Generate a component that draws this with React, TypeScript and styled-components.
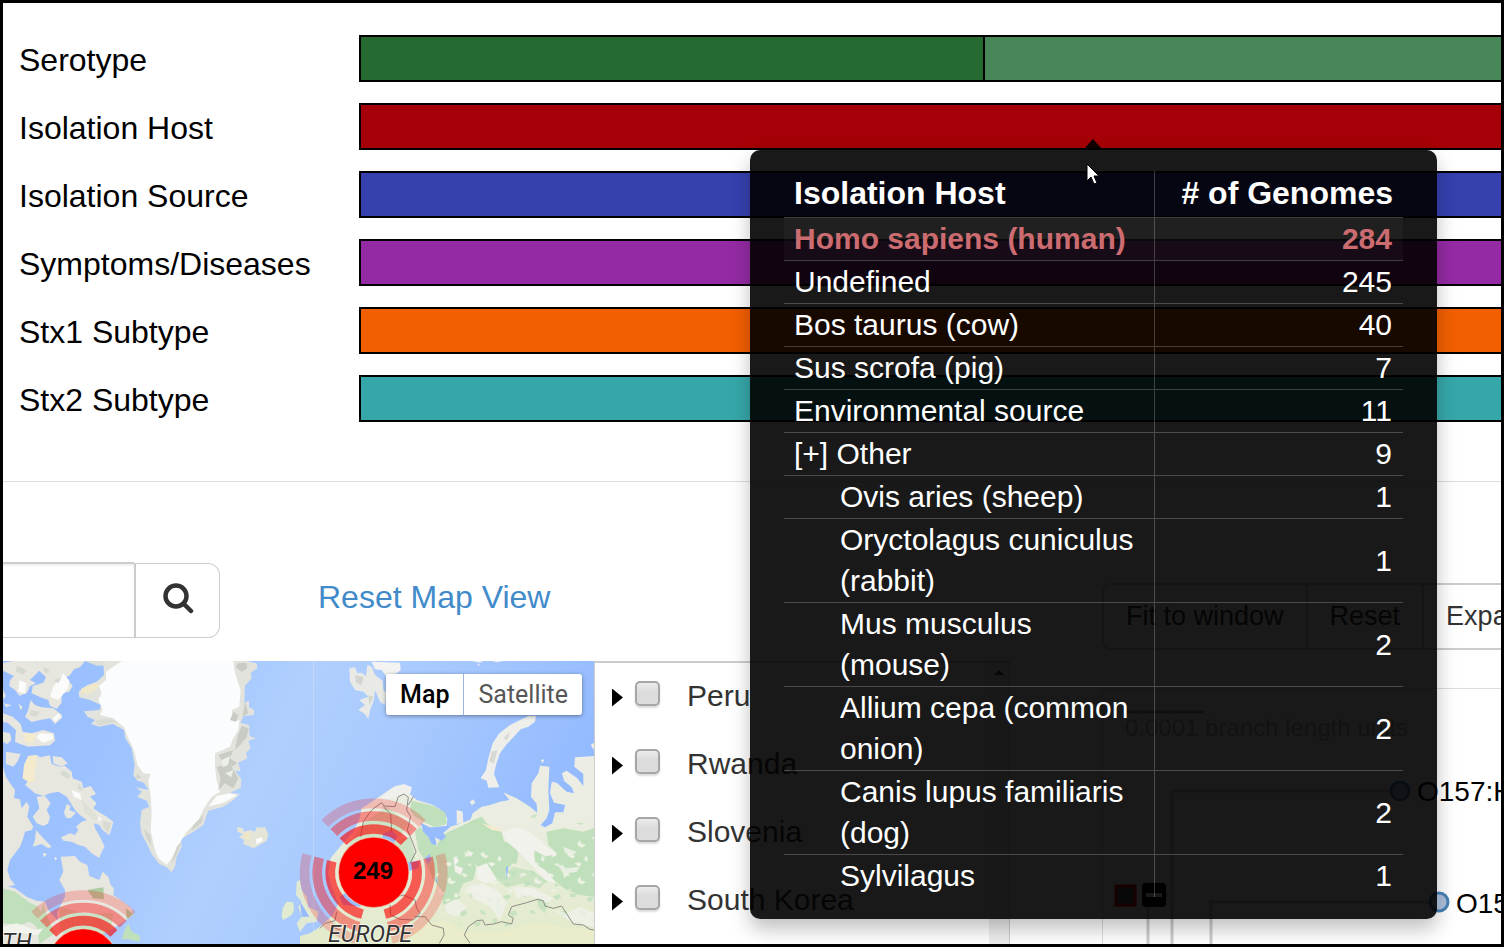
import React from "react";
import styled, { createGlobalStyle, css } from "styled-components";

const Global = createGlobalStyle`
  *, *::before, *::after { box-sizing: border-box; }
  body { margin: 0; background: #fff; }
  button, input, table { font: inherit; }
`;

const Frame = styled.div`
  display: flex;
  flex-direction: column;
  height: 100vh;
  overflow: hidden;
  border: 3px solid #000;
  background: #fff;
  color: #000;
  font-family: "Liberation Sans", Arial, sans-serif;
  font-size: 32px;
`;

const Chart = styled.section`
  display: flex;
  flex-direction: column;
  gap: 21px;
  padding: 32px 0 59px 16px;
  border-bottom: 1px solid #ddd;
`;

const ChartRow = styled.div`
  display: grid;
  grid-template-columns: 340px 1fr;
  height: 47px;
  line-height: 50px;
`;

const Track = styled.div`
  position: relative;
  display: flex;
  height: 47px;
`;

const Segment = styled.div<{ $color: string; $share: number }>`
  flex: ${(p) => p.$share};
  background: ${(p) => p.$color};
  border: 2px solid #000;
  border-right: 0;
`;

const Tooltip = styled.div`
  position: absolute;
  z-index: 5;
  top: 47px;
  left: 391px;
  width: 687px;
  padding: 21px 34px 22px;
  border-radius: 10px;
  background: rgba(0, 0, 0, 0.9);
  box-shadow: 0 10px 20px rgba(0, 0, 0, 0.25);
  color: #fff;

  &::before {
    content: "";
    position: absolute;
    left: 333px;
    bottom: 100%;
    border: 10px solid transparent;
    border-top: 0;
    border-bottom: 11px solid rgba(0, 0, 0, 0.9);
  }
`;

const Pointer = styled.svg`
  position: absolute;
  top: 13px;
  left: 335px;
`;

const HostTable = styled.table`
  width: 100%;
  border-collapse: separate;
  border-spacing: 0;
  table-layout: fixed;
  font-size: 30px;
  line-height: 41px;
  text-align: left;
`;

const cell = css`
  border-top: 1px solid rgba(255, 255, 255, 0.22);
  font-weight: inherit;
`;

const HeadCell = styled.th<{ $number?: boolean }>`
  width: ${(p) => (p.$number ? "248px" : "371px")};
  height: 46px;
  padding: 0 10px 2px;
  font-size: 32px;
  font-weight: bold;
  text-align: ${(p) => (p.$number ? "right" : "left")};
  border-right: ${(p) => (p.$number ? "0" : "1px solid rgba(255, 255, 255, 0.22)")};
`;

const HostRow = styled.tr<{ $active?: boolean }>`
  ${(p) =>
    p.$active &&
    css`
      color: #cc6c70;
      font-weight: bold;
      background: rgba(255, 255, 255, 0.03);
    `}
`;

const NameCell = styled.th<{ $nested?: boolean }>`
  ${cell}
  padding: 0 14px 1px ${(p) => (p.$nested ? "56px" : "10px")};
  border-right: 1px solid rgba(255, 255, 255, 0.22);
`;

const CountCell = styled.td`
  ${cell}
  padding: 0 11px 1px;
  text-align: right;
`;

const Workspace = styled.div`
  display: grid;
  grid-template-columns: 1007fr 491fr;
  flex: 1;
  min-height: 0;
`;

const MapColumn = styled.section`
  display: flex;
  flex-direction: column;
  min-width: 0;
  padding-top: 80px;
`;

const MapTools = styled.div`
  display: flex;
  height: 76px;
  margin-bottom: 23px;
`;

const SearchBox = styled.form`
  display: flex;
  width: 217px;
`;

const SearchInput = styled.input`
  flex: 1;
  min-width: 0;
  padding: 0 16px;
  border: 0 solid #ccc;
  border-width: 2px 0 1px;
  box-shadow: inset 0 2px 2px rgba(0, 0, 0, 0.06);
  background: #fff;
`;

const SearchButton = styled.button`
  display: flex;
  align-items: center;
  justify-content: center;
  width: 86px;
  margin-top: 1px;
  padding: 0 0 4px;
  border: 1px solid #ccc;
  border-left: 2px solid #ccc;
  border-radius: 0 12px 12px 0;
  background: #fff;
`;

const ResetLink = styled.a`
  margin-left: 98px;
  line-height: 71px;
  color: #428bca;
  text-decoration: none;
`;

const MapBody = styled.div`
  display: grid;
  grid-template-columns: 591fr 416fr;
  flex: 1;
  min-height: 0;
`;

const MapView = styled.div`
  position: relative;
  overflow: hidden;
  background: #a3c6ff;
`;

const MapArt = styled.svg`
  display: block;
  width: 100%;
  height: 100%;
`;

const MapTypes = styled.div`
  position: absolute;
  top: 13px;
  right: 12px;
  display: flex;
  border-radius: 3px;
  box-shadow: 0 1px 4px rgba(0, 0, 0, 0.4);
  font-family: Roboto, sans-serif;
  font-size: 25px;
`;

const MapType = styled.button<{ $on?: boolean }>`
  height: 41px;
  padding: 0 14px;
  border: 0;
  border-left: ${(p) => (p.$on ? "0" : "1px solid #9db2d8")};
  border-radius: ${(p) => (p.$on ? "3px 0 0 3px" : "0 3px 3px 0")};
  background: #fff;
  color: ${(p) => (p.$on ? "#000" : "#565656")};
  font-weight: ${(p) => (p.$on ? 500 : 400)};
`;

const PlacePanel = styled.div`
  display: flex;
  border: 0 solid #ccc;
  border-width: 2px 1px 0;
  overflow: hidden;
`;

const PlaceList = styled.ul`
  flex: 1;
  margin: 0;
  padding: 0 0 0 17px;
  list-style: none;
  color: #333;
  font-size: 30px;
`;

const PlaceItem = styled.li`
  display: flex;
  align-items: center;
  height: 68px;
  padding-bottom: 2px;
`;

const Disclosure = styled.button`
  width: 11px;
  height: 18px;
  margin: 3px 12px 0 0;
  padding: 0;
  border: 0;
  background: #000;
  clip-path: polygon(0 0, 100% 50%, 0 100%);
`;

const PlaceLabel = styled.label`
  display: flex;
  align-items: center;
  gap: 27px;
`;

const Tick = styled.input`
  appearance: none;
  width: 25px;
  height: 25px;
  margin: 0 0 6px;
  border: 2px solid #a6a6a6;
  border-radius: 5px;
  background: linear-gradient(#ececec, #dcdcdc 40%);
  box-shadow: 0 2px 2px rgba(0, 0, 0, 0.14);
`;

const Scrollbar = styled.div`
  display: flex;
  justify-content: center;
  width: 20px;
  padding-top: 7px;
  background: #eee;

  &::before {
    content: "";
    width: 10px;
    height: 5px;
    background: #444;
    clip-path: polygon(50% 0, 100% 100%, 0 100%);
  }
`;

const TreeColumn = styled.section`
  display: flex;
  flex-direction: column;
  min-width: 0;
  overflow: hidden;
  padding: 101px 0 0 92px;
`;

const ButtonGroup = styled.div`
  display: flex;
  width: max-content;
  margin-bottom: 38px;
  font-size: 27px;
`;

const GroupButton = styled.button`
  height: 67px;
  padding: 0 22px;
  border: 2px solid #ccc;
  border-right-width: 0;
  background: #fff;
  color: #333;

  &:first-child {
    border-radius: 8px 0 0 8px;
  }
`;

const TreePanel = styled.div`
  flex: 1;
  min-height: 0;
  border: 0 solid #ddd;
  border-width: 1px 0 0 1px;
`;

const TreeArt = styled.svg`
  display: block;
  width: 100%;
  height: 100%;
`;

const tracks = [
  { label: "Serotype", segments: [{ color: "#256b31", share: 624 }, { color: "#488858", share: 518 }] },
  { label: "Isolation Host", segments: [{ color: "#a50007", share: 1 }] },
  { label: "Isolation Source", segments: [{ color: "#3640ae", share: 1 }] },
  { label: "Symptoms/Diseases", segments: [{ color: "#942ba4", share: 1 }] },
  { label: "Stx1 Subtype", segments: [{ color: "#f25f00", share: 1 }] },
  { label: "Stx2 Subtype", segments: [{ color: "#36a7a9", share: 1 }] },
];

const hosts = [
  { name: "Homo sapiens (human)", count: 284, active: true },
  { name: "Undefined", count: 245 },
  { name: "Bos taurus (cow)", count: 40 },
  { name: "Sus scrofa (pig)", count: 7 },
  { name: "Environmental source", count: 11 },
  { name: "[+] Other", count: 9 },
  { name: "Ovis aries (sheep)", count: 1, nested: true },
  { name: "Oryctolagus cuniculus (rabbit)", count: 1, nested: true },
  { name: "Mus musculus (mouse)", count: 2, nested: true },
  { name: "Allium cepa (common onion)", count: 2, nested: true },
  { name: "Canis lupus familiaris (dog)", count: 2, nested: true },
  { name: "Sylvilagus", count: 1, nested: true },
];

const places = ["Peru", "Rwanda", "Slovenia", "South Korea"];

function HostTooltip() {
  return (
    <Tooltip role="tooltip">
      <HostTable>
        <thead>
          <tr>
            <HeadCell scope="col">Isolation Host</HeadCell>
            <HeadCell scope="col" $number># of Genomes</HeadCell>
          </tr>
        </thead>
        <tbody>
          {hosts.map((h) => (
            <HostRow key={h.name} $active={h.active}>
              <NameCell scope="row" $nested={h.nested}>{h.name}</NameCell>
              <CountCell>{h.count}</CountCell>
            </HostRow>
          ))}
        </tbody>
      </HostTable>
      <Pointer width="16" height="24" viewBox="0 0 16 24" aria-hidden="true">
        <path d="M2 1v17l4-4 3 7 3-1-3-7h5z" fill="#fff" stroke="#000" strokeWidth="1" />
      </Pointer>
    </Tooltip>
  );
}

function arc(cx: number, cy: number, r: number, from: number) {
  const at = (deg: number) => {
    const a = (deg * Math.PI) / 180;
    return `${(cx + r * Math.cos(a)).toFixed(1)} ${(cy + r * Math.sin(a)).toFixed(1)}`;
  };
  return `M${at(from)}A${r} ${r} 0 0 1 ${at(from + 90)}`;
}

function Cluster({ cx, cy, count }: { cx: number; cy: number; count?: number }) {
  const rings = [
    { r: 130, o: 0.62 },
    { r: 169, o: 0.4 },
    { r: 207, o: 0.2 },
  ];
  return (
    <g>
      {rings.map(({ r, o }) => (
        <path
          key={r}
          d={[-135, -15, 105].map((a) => arc(cx, cy, r, a)).join("")}
          fill="none"
          stroke="#f00"
          strokeOpacity={o}
          strokeWidth="29"
        />
      ))}
      <circle cx={cx} cy={cy} r="106" fill="#f00" stroke="#e0e8c8" strokeOpacity=".6" strokeWidth="4" />
      {count && (
        <text x={cx - 2} y={cy + 19} textAnchor="middle" fontFamily="Liberation Sans, Arial, sans-serif" fontWeight="bold" fontSize="72">
          {count}
        </text>
      )}
    </g>
  );
}

function WorldMap() {
  return (
    <MapArt viewBox="9 33 1773 849" preserveAspectRatio="xMidYMin slice" role="img" aria-label="Map of genome locations">
      <defs>
        <linearGradient id="sea" x1="0" x2="1" y1="0" y2=".25">
          <stop offset="0" stopColor="#97bdff" />
          <stop offset=".25" stopColor="#9dc2ff" />
          <stop offset=".5" stopColor="#b0cffe" />
          <stop offset=".68" stopColor="#a9cafe" />
          <stop offset="1" stopColor="#94bbff" />
        </linearGradient>
        <linearGradient id="steppe" x1="0" x2="0" y1="0" y2="1">
          <stop offset="0" stopColor="#edede6" />
          <stop offset=".35" stopColor="#eaede0" />
          <stop offset="1" stopColor="#e2ebcb" />
        </linearGradient>
        <pattern id="clearings" width="130" height="110" patternUnits="userSpaceOnUse">
          <g fill="#eef2e4">
            <path d="M10 12l14-4 6 8-12 2-4 8zM52 30l8-10 4 12 14 2-10 8-12-2zM96 8l16 6-4 8-10-4zM20 62l12-6 2 8 12 4-8 8-10-6zM78 66l6 10-4 10-8-8zM104 56l16 4-2 10-8-2-4 8zM44 90l14-4 8 6-10 8zM4 94l8 4-2 8zM112 92l10-2 2 10z" />
          </g>
        </pattern>
        <pattern id="groves" width="150" height="120" patternUnits="userSpaceOnUse">
          <g fill="#bfe0bb">
            <path d="M8 20l18-8 8 10-14 8zM60 8l10 4 12-2-6 12-16-2zM110 24l20-4-4 14-12 2zM30 66l16-6 6 12-14 8-6-6zM88 60l14 2 8 14-16-4zM14 100l14-2 4 8-16 4zM70 98l20-4 2 10-14 6zM130 86l12 2-4 12-10-4z" />
          </g>
        </pattern>
      </defs>
      <rect x="0" y="0" width="1800" height="900" fill="url(#sea)" />

      {/* Arctic Canada */}
      <g fill="#e7e6df">
        <path d="M9 38L40 33H105L118 62L90 90L108 100L90 108L80 130L58 137L45 120L28 108L30 90L42 78L25 70L9 62Z" />
        <path d="M105 33H255L240 52L222 58L210 75L195 85L212 100L218 108L208 125L186 130L184 160L170 176L150 168L145 150L118 140L95 130L98 108L130 98L138 82L115 60Z" />
        <path d="M92 150L105 165L125 172L160 175L186 195L185 205L165 222L150 205L120 210L95 216L75 200L85 180Z" />
        <path d="M9 190L38 200L62 222L68 245L95 250L130 240L162 250L165 272L150 286L85 290L60 282L45 275L48 240L25 220L9 215Z" />
        <path d="M9 245L30 250L34 270L22 283L9 275Z" />
        <path d="M18 305L62 312L52 335L40 350L18 342Z" />
        <path d="M9 120L18 138L9 148ZM55 160L68 172L62 180ZM12 160L35 166L18 172Z" />
        <path d="M85 318L110 315L120 322L150 316L155 342L180 350L195 348L215 365L218 385L245 395L250 415L272 408L288 432L270 440L290 460L280 475L300 488L320 500L340 515L335 535L328 556L308 540L298 525L282 520L285 535L300 560L314 590L305 605L298 624L275 610L255 590L235 585L215 575L190 572L183 562L210 550L225 555L235 540L228 530L245 515L260 510L240 495L225 480L200 440L175 425L150 430L130 438L105 430L75 405L85 392L68 385L72 345Z" />
        <path d="M158 318L185 322L203 340L185 350L160 340Z" />
        <path d="M9 350L18 380L30 400L45 420L42 445L60 448L65 475L80 455L88 470L82 500L100 530L95 540L75 545L68 570L60 590L30 630L22 660L30 685L45 705L9 712Z" />
        <path d="M110 440L135 438L152 460L140 480L150 500L145 520L130 528L110 520L98 500L118 475Z" />
        <path d="M108 540L130 565L155 590L145 595L125 582L98 590L105 570Z" />
        <path d="M200 462L212 468L208 480L228 488L212 505L198 503L192 488ZM128 608L142 612L132 622ZM162 620L172 625L166 632Z" />
        <path d="M9 705L45 715L80 740L110 752L135 755L145 780L175 812L170 790L195 740L195 720L178 690L190 665L182 620L225 618L240 635L262 645L268 678L298 690L308 665L325 680L332 705L342 715L340 735L365 752L395 775L400 795L370 815L340 835L310 850L300 882H9Z" />
      </g>
      <g fill="#fbfbfb">
        <path d="M190 70L208 92L205 115L175 150L150 140L160 110Z" />
        <path d="M120 250L158 252L160 268L130 278L108 262ZM175 190L184 200L165 216L158 205Z" />
        <path d="M58 90L80 100L75 130L55 125ZM215 420L240 430L245 450L222 440ZM288 495L305 505L298 515Z" />
      </g>
      <g fill="#d7dad1">
        <path d="M50 48L80 60L70 74L48 66ZM128 50L150 60L138 72ZM160 90L185 82L175 100ZM92 180L120 185L108 200L88 196ZM190 360L212 375L205 388L180 372ZM238 400L250 425L232 415ZM310 512L334 520L325 548L308 530Z" />
        <path d="M245 450L270 475L300 505L285 512L255 488Z" opacity=".5" />
      </g>
      <path d="M85 318L110 316L108 345L102 375L106 392L88 398L68 385L74 342Z" fill="#f3ebcb" />
      <path d="M72 250L108 252L100 278L75 276Z" fill="#f3ebcb" />
      <g fill="#bfe0bb">
        <path d="M9 715L45 725L85 755L115 770L130 800L110 830L90 815L60 825L9 820Z" />
        <path d="M130 760L142 800L165 850L118 882L110 830Z" />
        <path d="M180 770L250 790L340 790L330 850L180 850Z" opacity=".7" />
        <path d="M262 720L310 712L312 748L280 745ZM378 775L400 792L380 808Z" fill="#accb9f" />
      </g>
      <path d="M9 830L50 820L105 840L130 835L115 855L60 850L9 845Z" fill="#f2f3ed" />
      <path d="M385 820L395 845L420 858L418 875L385 868L365 868L372 845Z" fill="#bfe0bb" />

      {/* Greenland */}
      <path d="M255 33H365L345 45L290 47Z" fill="#dcdfd5" />
      <path d="M310 33L312 75L290 95L262 105L236 125L238 142L270 150L303 165L298 180L252 184L262 200L285 210L273 222L298 230L338 222L372 240L376 265L395 295L404 345L400 375L412 392L432 398L445 420L408 412L425 425L412 440L440 452L448 470L425 480L420 520L424 550L440 580L455 612L478 642L500 652L515 667L525 650L530 620L545 590L543 568L580 545L610 525L625 482L670 470L700 450L720 432L690 428L722 414L724 388L705 362L722 364L715 338L742 325L738 308L752 295L745 272L768 265L748 258L748 225L722 218L730 198L762 195L762 180L747 172L747 152L733 158L735 107L755 85L752 68L772 55L770 40L740 33Z" fill="#e2e3dc" />
      <path d="M365 33L318 65L318 90L296 108L305 130L295 150L308 178L300 195L340 205L372 232L385 265L402 300L412 345L430 370L452 372L445 392L452 440L455 490L452 540L462 590L475 625L500 645L515 625L535 585L560 545L595 510L612 475L635 440L660 425L650 390L645 350L645 310L690 290L700 265L715 240L718 210L700 215L695 180L718 170L722 120L705 70L700 33Z" fill="#fafcfd" />
      <path d="M625 470L650 438L690 430L712 436L670 458Z" fill="#fbfcfc" />
      <g fill="#c9ccc4">
        <path d="M712 40L740 38L742 55L725 66L708 52ZM735 155L745 190L728 200ZM725 228L746 235L740 262L720 285L705 300L712 262ZM700 185L715 195L708 215L690 210Z" />
        <path d="M655 315L700 300L690 325L712 340L695 350L715 385L700 415L675 400L655 420L662 385L650 350L675 345Z" />
        <path d="M580 525L610 495L605 520L575 542ZM530 590L545 575L525 625L515 640ZM412 370L425 385L408 385ZM430 535L450 555L455 590L440 565Z" opacity=".7" />
      </g>
      <path d="M665 330L690 318L684 345L668 352ZM676 370L700 360L694 382Z" fill="#eceeea" />
      <path d="M245 115L290 98L298 112L265 132L240 130Z" fill="#efe8cb" />
      <path d="M285 212L330 205L350 215L298 226Z" fill="#d8dbd4" />

      {/* Iceland */}
      <path d="M712 530L728 535L732 545L750 540L765 545L770 532L795 532L805 552L800 572L760 595L745 588L730 582L732 570L718 562L728 552L712 545Z" fill="#e4e5d6" />
      <path d="M735 550L750 548L748 565L735 568Z" fill="#f0e8c4" />
      <path d="M768 568L785 562L788 572L770 582Z" fill="#fff" />

      <g transform="translate(900 0)">
        <rect x="39" y="33" width="2" height="849" fill="#d5e4fb" opacity=".7" />
        {/* Svalbard and Novaya Zemlya */}
        <path d="M148 55L165 52L172 70L185 68L198 78L202 45L215 50L225 75L248 92L250 120L260 130L255 165L240 155L225 120L222 150L210 180L205 207L192 190L175 180L195 165L178 150L205 140L190 125L165 120L150 95Z" fill="#e9eae6" />
        <path d="M165 75L190 82L185 105L168 98ZM205 135L220 140L208 165Z" fill="#d3d6d0" />
        <path d="M215 35L300 38L302 60L290 70L258 78L245 60L225 58Z" fill="#f3f4f2" />
        <path d="M515 33H550L540 38ZM575 33H610L590 37ZM532 40L540 44L535 48Z" fill="#eee" />
        <path d="M685 198L708 198L705 215L685 230L662 238L640 262L618 285L600 310L588 345L582 372L598 412L565 413L560 392L542 385L558 360L565 325L578 280L598 250L630 225Z" fill="#eeeeea" />
        <path d="M575 305L592 300L582 340L568 335ZM610 265L630 245L622 270Z" fill="#d7d9d5" />

        {/* British Isles */}
        <path d="M-40 755L-20 757L-18 780L-25 795L-50 810L-55 800L-52 775Z" fill="#e0ebcf" />
        <path d="M-10 695L0 690L5 720L20 740L25 770L55 785L50 815L20 820L0 845L-10 820L5 800L-5 770L5 755L-12 735Z" fill="#e2e9d3" />

        {/* Eurasia */}
        <path d="M882 318L825 322L823 350L850 372L850 408L832 385L800 362L786 370L792 392L815 412L822 430L800 425L770 398L755 395L750 430L762 458L795 465L790 487L765 487L757 520L735 532L722 525L740 505L748 480L745 420L748 350L720 347L715 370L695 400L693 440L710 462L712 488L690 470L650 445L610 427L628 450L600 455L570 465L545 470L518 490L512 508L485 520L450 530L430 545L405 545L390 532L440 528L442 505L430 485L400 465L350 450L330 432L335 412L312 403L285 408L245 435L205 462L185 475L178 510L160 545L120 590L92 625L84 670L95 712L115 760L100 795L60 830L30 850L0 858V882H882Z" fill="url(#steppe)" />
        <path d="M470 480L488 485L490 520L470 522ZM510 455L520 448L526 458L515 466ZM722 330L733 328L728 340ZM872 285L882 278V300Z" fill="#edede6" />
        <path d="M285 412L312 403L335 412L330 432L290 440L250 450L245 438Z" fill="#f0f1ee" />

        <g fill="#bfe0bb">
          <path d="M335 452L400 467L436 488L440 522L405 532L370 515L345 500L330 480Z" />
          <path d="M440 548L485 528L520 510L545 500L560 520L590 540L605 545L612 575L640 580L655 610L650 640L625 650L620 690L590 685L560 640L530 650L520 690L490 700L470 745L430 765L425 720L400 690L380 640L355 600L345 545L360 530L385 560L410 588L425 560Z" />
          <path d="M740 545L790 535L850 545L882 535V740L840 735L800 720L760 690L735 660L700 640L705 600L735 620L770 610L745 585Z" />
          <path d="M590 690L640 650L700 665L740 690L720 715L670 700L620 712Z" opacity=".7" />
          <path d="M240 590L330 560L345 620L310 690L270 740L210 730L120 700L130 610L190 520L260 470L325 520L300 560Z" opacity=".7" />
          <path d="M590 740L605 745L600 800L585 790ZM710 740L745 755L735 790L715 770ZM690 500L712 490L705 505ZM828 518L858 520L840 524Z" opacity=".8" />
        </g>
        <path d="M620 640L700 660L800 720L882 740V830L700 790L560 860L430 800L470 740L540 700Z" fill="url(#groves)" opacity=".8" />
        <path d="M450 600L560 590L640 640L700 600L882 560V730L800 720L640 740L500 730L430 760L400 690Z" fill="url(#clearings)" />
        <g fill="#f1f2ec">
          <path d="M606 548L650 530L690 545L740 590L770 612L740 618L700 600L706 640L740 665L770 700L735 690L690 640L650 600L620 575Z" />
          <path d="M460 620L478 632L465 645L490 655L482 675L465 665ZM500 600L520 608L512 622ZM528 655L560 640L590 690L560 700L535 690Z" />
          <path d="M500 710L545 700L590 720L620 760L600 810L570 770L520 745ZM640 710L700 715L760 745L740 760L690 735L650 745ZM790 590L830 605L820 615L795 608ZM770 640L800 655L840 650L830 665L790 672Z" opacity=".8" />
          <path d="M435 765L470 748L500 770L470 800L440 790ZM760 780L800 790L840 770L882 790V830L820 820Z" opacity=".7" />
        </g>
        <path d="M345 830L430 810L500 850L620 840L700 820L882 842V882H330Z" fill="#eeedc8" opacity=".6" />
        <path d="M545 520L600 535L605 545L575 540Z" fill="#f3ead0" />

        {/* inland waters */}
        <g fill="#96bbff">
          <path d="M362 518L395 535L440 528L450 532L430 548L438 560L425 572L405 562L410 585L395 582L385 560L370 545Z" />
          <path d="M250 550L275 540L292 560L270 600L255 640L280 655L330 635L360 632L355 655L320 665L310 700L270 720L200 735L180 770L130 765L118 740L150 720L200 690L230 640Z" />
          <path d="M375 625L388 612L395 630L382 642ZM405 680L412 690L410 700ZM618 652L625 648L620 690ZM0 755L10 770L28 800L5 800Z" />
        </g>

        {/* borders */}
        <g fill="none" stroke="#8d8d86" strokeWidth="3" strokeLinejoin="round">
          <path d="M182 560L190 515L215 480L245 458L252 468L285 470L295 440L312 432L325 442L320 480L332 500L322 540L335 570L348 605L330 640" />
          <path d="M250 470L272 492L275 545M325 465L340 440" />
          <path d="M275 745L310 735L345 750L350 775L360 790L340 810L300 808L272 795L270 765M345 800L375 800L395 825L430 835L432 855L418 880" />
          <path d="M510 880L493 855L505 830L530 812L548 810L555 825L580 822L605 815L635 822L640 805L625 795L635 770L680 758L712 748L730 752L735 768L760 775L785 768L820 822L850 825L870 838L882 840" />
          <path d="M60 835L75 820L105 812L110 785M95 830L120 840" />
        </g>
      </g>

      <Cluster cx={250} cy={942} />
      <Cluster cx={1121} cy={667} count={249} />

      <g fontFamily="Roboto, sans-serif" fontStyle="italic" fontSize="70" fill="#333" stroke="#fff" strokeOpacity=".6" strokeWidth="6" paintOrder="stroke">
        <text x="1110" y="876" textAnchor="middle">EUROPE</text>
        <text x="95" y="900" textAnchor="end">NORTH</text>
      </g>
    </MapArt>
  );
}

function Tree() {
  return (
    <TreeArt role="img" aria-label="Phylogenetic tree">
      <path d="M23 23H101" stroke="#999" strokeWidth="3" />
      <g fill="none" stroke="#ccc" strokeWidth="3">
        <path d="M69 400V102H288M108 400V213H326M45 218V400M62 207H69" />
      </g>
      <rect x="13" y="197" width="19" height="19" fill="#555" stroke="#e00000" strokeWidth="3" />
      <rect x="39" y="194" width="24" height="24" rx="4" fill="#000" />
      <rect x="43" y="204" width="16" height="4" fill="#fff" />
      <g fill="#aec1dd" stroke="#4682b4" strokeWidth="3">
        <circle cx="297" cy="102" r="9" />
        <circle cx="336" cy="213" r="9" />
      </g>
      <g fontFamily="Liberation Sans, Arial, sans-serif">
        <text x="22" y="47" fontSize="24" fill="#b4b4b4">0.0001 branch length units</text>
        <text x="314" y="112" fontSize="28">O157:H7</text>
        <text x="353" y="224" fontSize="28">O157:H7</text>
      </g>
    </TreeArt>
  );
}

export default function App() {
  return (
    <Frame>
      <Global />
      <Chart>
        {tracks.map((t) => (
          <ChartRow key={t.label}>
            <span>{t.label}</span>
            <Track>
              {t.segments.map((s) => (
                <Segment key={s.color} $color={s.color} $share={s.share} />
              ))}
              {t.label === "Isolation Host" && <HostTooltip />}
            </Track>
          </ChartRow>
        ))}
      </Chart>
      <Workspace>
        <MapColumn>
          <MapTools>
            <SearchBox>
              <SearchInput type="text" aria-label="Search location" />
              <SearchButton type="button" aria-label="Search">
                <svg width="32" height="32" viewBox="0 0 32 32" fill="none" stroke="#333" aria-hidden="true">
                  <circle cx="14" cy="13" r="10.5" strokeWidth="4.500" />
                  <path d="M22 21L29 28" strokeWidth="4.500" strokeLinecap="round" />
                </svg>
              </SearchButton>
            </SearchBox>
            <ResetLink href="#">Reset Map View</ResetLink>
          </MapTools>
          <MapBody>
            <MapView>
              <WorldMap />
              <MapTypes>
                <MapType type="button" $on>Map</MapType>
                <MapType type="button">Satellite</MapType>
              </MapTypes>
            </MapView>
            <PlacePanel>
              <PlaceList>
                {places.map((p) => (
                  <PlaceItem key={p}>
                    <Disclosure type="button" aria-label={`Show ${p}`} />
                    <PlaceLabel>
                      <Tick type="checkbox" />
                      {p}
                    </PlaceLabel>
                  </PlaceItem>
                ))}
              </PlaceList>
              <Scrollbar aria-hidden="true" />
            </PlacePanel>
          </MapBody>
        </MapColumn>
        <TreeColumn>
          <ButtonGroup>
            <GroupButton type="button">Fit to window</GroupButton>
            <GroupButton type="button">Reset</GroupButton>
            <GroupButton type="button">Expand</GroupButton>
          </ButtonGroup>
          <TreePanel>
            <Tree />
          </TreePanel>
        </TreeColumn>
      </Workspace>
    </Frame>
  );
}
